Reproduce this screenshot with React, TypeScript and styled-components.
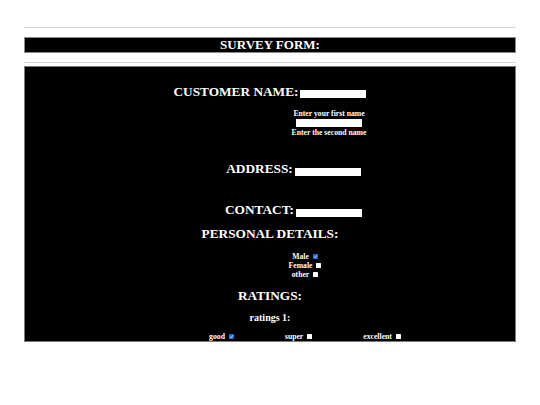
import React from "react";
import styled, { createGlobalStyle } from "styled-components";

const Global = createGlobalStyle`
  html, body { margin: 0; padding: 0; background: #ffffff; }
  body { font-family: "Liberation Serif", "Times New Roman", serif; }
  * { box-sizing: border-box; }
`;

const Page = styled.div`
  padding: 27px 24px 0;
  width: 540px;
`;

const Rule = styled.hr<{ $mt?: number }>`
  margin: ${(p) => p.$mt ?? 0}px 0 0;
  border: none;
  height: 1px;
  background: #d3d3d3;
`;

const Header = styled.header`
  margin-top: 9px;
  height: 16px;
  background: #000;
  border: 1px solid #8a8a8a;
  display: flex;
  justify-content: center;
`;

const Title = styled.h1`
  margin: 0;
  font-size: 13px;
  line-height: 14px;
  font-weight: bold;
  color: #fff;
`;

const Main = styled.main`
  margin-top: 3px;
  height: 276px;
  background: #000;
  border: 1px solid #7a7a7a;
  overflow: hidden;
  padding-top: 17px;
  color: #fff;
  display: flex;
  flex-direction: column;
`;

const FieldRow = styled.div<{ $mt?: number; $shift?: number }>`
  margin-top: ${(p) => p.$mt ?? 0}px;
  padding-left: ${(p) => p.$shift ?? 0}px;
  height: 16px;
  display: flex;
  justify-content: center;
  align-items: flex-start;
  gap: 2px;
`;

const Heading = styled.h2<{ $mt?: number }>`
  margin: ${(p) => p.$mt ?? 0}px 0 0;
  font-size: 13.3px;
  line-height: 16px;
  font-weight: bold;
  text-align: center;
  white-space: nowrap;
`;

const TextInput = styled.input<{ $mt?: number }>`
  display: block;
  width: 66px;
  height: 8px;
  margin: ${(p) => p.$mt ?? 0}px 0 0;
  padding: 0;
  border: none;
  background: #fff;
`;

const HintGroup = styled.div<{ $mt?: number; $shift?: number }>`
  margin-top: ${(p) => p.$mt ?? 0}px;
  padding-left: ${(p) => p.$shift ?? 0}px;
  display: flex;
  flex-direction: column;
  align-items: center;
`;

const Hint = styled.label<{ $mt?: number }>`
  display: block;
  margin-top: ${(p) => p.$mt ?? 0}px;
  font-size: 7.7px;
  line-height: 9px;
  font-weight: bold;
  white-space: nowrap;
`;

const OptionList = styled.div<{ $mt?: number; $shift?: number }>`
  margin-top: ${(p) => p.$mt ?? 0}px;
  padding-left: ${(p) => p.$shift ?? 0}px;
  display: flex;
  flex-direction: column;
  align-items: center;
`;

const Option = styled.label`
  display: block;
  font-size: 7.7px;
  line-height: 9px;
  font-weight: bold;
  white-space: nowrap;
`;

const SubHeading = styled.h3<{ $mt?: number }>`
  margin: ${(p) => p.$mt ?? 0}px 0 0;
  font-size: 10px;
  line-height: 12px;
  font-weight: bold;
  text-align: center;
`;

const RatingRow = styled.div<{ $mt?: number; $shift?: number }>`
  margin-top: ${(p) => p.$mt ?? 0}px;
  padding-left: ${(p) => p.$shift ?? 0}px;
  display: flex;
  justify-content: center;
  gap: 51px;
`;

const Box = styled.span<{ $checked?: boolean }>`
  display: inline-block;
  width: 5px;
  height: 5px;
  margin-left: 4px;
  background: ${(p) => (p.$checked ? "#1b6ad9" : "#ffffff")};
  border-radius: 0.6px;
  position: relative;
  svg {
    position: absolute;
    inset: 0;
    width: 100%;
    height: 100%;
  }
`;

const Check: React.FC<{ checked?: boolean }> = ({ checked }) => (
  <Box $checked={checked} role="checkbox" aria-checked={checked ? "true" : "false"}>
    {checked && (
      <svg viewBox="0 0 10 10">
        <path d="M2.2 5.3 L4.2 7.3 L7.9 2.8" fill="none" stroke="#fff" strokeWidth="1.6" />
      </svg>
    )}
  </Box>
);

export default function App() {
  return (
    <>
      <Global />
      <Page>
        <Rule />
        <Header>
          <Title>SURVEY FORM:</Title>
        </Header>
        <Rule $mt={9} />
        <Main>
          <FieldRow>
            <Heading>CUSTOMER NAME:</Heading>
            <TextInput $mt={6} aria-label="first name" />
          </FieldRow>
          <HintGroup $mt={8.6} $shift={118}>
            <Hint>Enter your first name</Hint>
            <TextInput $mt={1.7} aria-label="second name" />
            <Hint $mt={0.6}>Enter the second name</Hint>
          </HintGroup>
          <FieldRow $mt={24.6} $shift={47}>
            <Heading>ADDRESS:</Heading>
            <TextInput $mt={6.8} aria-label="address" />
          </FieldRow>
          <FieldRow $mt={25} $shift={47}>
            <Heading>CONTACT:</Heading>
            <TextInput $mt={6.8} aria-label="contact" />
          </FieldRow>
          <Heading $mt={8}>PERSONAL DETAILS:</Heading>
          <OptionList $mt={9.4} $shift={70}>
            <Option>
              Male<Check checked />
            </Option>
            <Option>
              Female<Check />
            </Option>
            <Option>
              other<Check />
            </Option>
          </OptionList>
          <Heading $mt={9.6}>RATINGS:</Heading>
          <SubHeading $mt={7.1}>ratings 1:</SubHeading>
          <RatingRow $mt={8.3} $shift={70}>
            <Option>
              good<Check checked />
            </Option>
            <Option>
              super<Check />
            </Option>
            <Option>
              excellent<Check />
            </Option>
          </RatingRow>
        </Main>
      </Page>
    </>
  );
}
